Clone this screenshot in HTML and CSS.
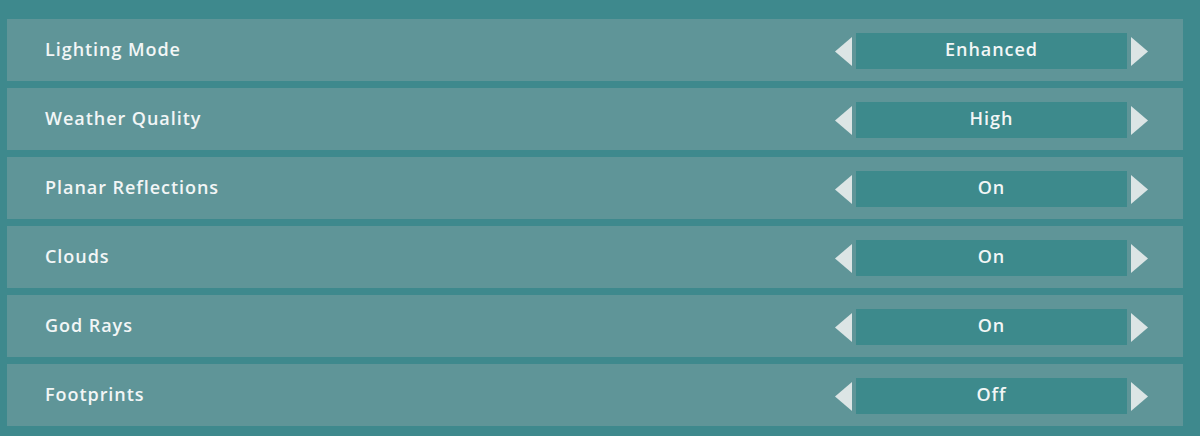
FILE: index.html
```html
<!DOCTYPE html>
<html lang="en">
<head>
<meta charset="utf-8">
<title>Graphics Settings</title>
<link rel="stylesheet" href="styles.css">
</head>
<body>
<div class="settings">
  <div class="row">
    <span class="label">Lighting Mode</span>
    <div class="picker">
      <svg class="arrow" viewBox="0 0 17 29"><polygon points="17,0 17,29 0,14.5"/></svg>
      <div class="value">Enhanced</div>
      <svg class="arrow" viewBox="0 0 17 29"><polygon points="0,0 0,29 17,14.5"/></svg>
    </div>
  </div>
  <div class="row">
    <span class="label">Weather Quality</span>
    <div class="picker">
      <svg class="arrow" viewBox="0 0 17 29"><polygon points="17,0 17,29 0,14.5"/></svg>
      <div class="value">High</div>
      <svg class="arrow" viewBox="0 0 17 29"><polygon points="0,0 0,29 17,14.5"/></svg>
    </div>
  </div>
  <div class="row">
    <span class="label">Planar Reflections</span>
    <div class="picker">
      <svg class="arrow" viewBox="0 0 17 29"><polygon points="17,0 17,29 0,14.5"/></svg>
      <div class="value">On</div>
      <svg class="arrow" viewBox="0 0 17 29"><polygon points="0,0 0,29 17,14.5"/></svg>
    </div>
  </div>
  <div class="row">
    <span class="label">Clouds</span>
    <div class="picker">
      <svg class="arrow" viewBox="0 0 17 29"><polygon points="17,0 17,29 0,14.5"/></svg>
      <div class="value">On</div>
      <svg class="arrow" viewBox="0 0 17 29"><polygon points="0,0 0,29 17,14.5"/></svg>
    </div>
  </div>
  <div class="row">
    <span class="label">God Rays</span>
    <div class="picker">
      <svg class="arrow" viewBox="0 0 17 29"><polygon points="17,0 17,29 0,14.5"/></svg>
      <div class="value">On</div>
      <svg class="arrow" viewBox="0 0 17 29"><polygon points="0,0 0,29 17,14.5"/></svg>
    </div>
  </div>
  <div class="row">
    <span class="label">Footprints</span>
    <div class="picker">
      <svg class="arrow" viewBox="0 0 17 29"><polygon points="17,0 17,29 0,14.5"/></svg>
      <div class="value">Off</div>
      <svg class="arrow" viewBox="0 0 17 29"><polygon points="0,0 0,29 17,14.5"/></svg>
    </div>
  </div>
</div>
</body>
</html>
```
FILE: styles.css
```css
html, body {
  margin: 0;
  height: 100%;
  background: #3e898d;
}

body {
  font-family: "Open Sans", "DejaVu Sans", sans-serif;
  color: #f2f6f6;
}

.settings {
  display: flex;
  flex-direction: column;
  gap: 7px;
  padding: 19px 17px 10px 7px;
}

.row {
  height: 62px;
  display: flex;
  align-items: center;
  justify-content: space-between;
  background: #5f9598;
  padding: 0 35px 0 38px;
}

.label {
  font-size: 18px;
  font-weight: 600;
  letter-spacing: 0.95px;
  padding-bottom: 3px;
}

.picker {
  display: flex;
  align-items: center;
  gap: 4px;
  padding-top: 2px;
}

.arrow {
  width: 17px;
  height: 29px;
  fill: #dce5e5;
}

.value {
  width: 271px;
  height: 36px;
  background: #3d8a8c;
  display: flex;
  align-items: center;
  justify-content: center;
  font-size: 18px;
  font-weight: 600;
  letter-spacing: 0.95px;
  padding-bottom: 5px;
  box-sizing: border-box;
}
```
